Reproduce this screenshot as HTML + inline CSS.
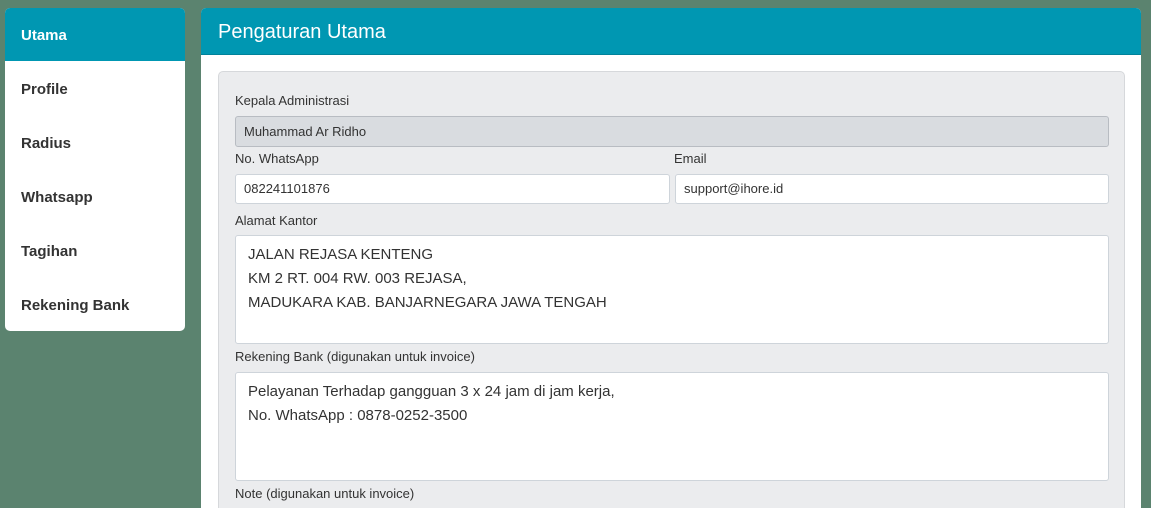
<!DOCTYPE html><html><head><style>
body{margin:0;width:1151px;height:502px;background:#5b836f;font-family:"Liberation Sans",sans-serif;overflow:hidden;position:relative}
.side{position:absolute;left:5px;top:8px;width:180px;height:323px;background:#fff;border-radius:5px;overflow:hidden}
.side div{height:54px;line-height:58px;padding-left:16px;font-size:15px;font-weight:bold;color:#333}
.side div.a{background:#0097b2;color:#fff;height:53px;line-height:56px}
.main{position:absolute;left:201px;top:8px;width:940px;height:500px;background:#fff;border-radius:5px 5px 0 0;overflow:hidden}
.hd{height:46px;background:#0097b2;border-bottom:1px solid #00829a;color:#fff;font-size:20px;line-height:48px;padding-left:17px}
.card{position:absolute;left:17px;top:63px;width:905px;height:460px;background:#ebecee;border:1px solid #d6d8db;border-radius:5px}
.l{position:absolute;left:16px;font-size:13px;color:#333}
.in{position:absolute;background:#fff;border:1px solid #ced4da;border-radius:3px;font-size:13px;color:#333;box-sizing:border-box;padding-left:8px}
.ta{font-size:15px;line-height:24px;padding:7px 12px;color:#333}
</style></head><body>
<div class="side"><div class="a">Utama</div><div>Profile</div><div>Radius</div><div>Whatsapp</div><div>Tagihan</div><div>Rekening Bank</div></div>
<div class="main"><div class="hd">Pengaturan Utama</div>
<div class="card">
<div class="l" style="top:21px">Kepala Administrasi</div>
<div class="in" style="left:16px;top:44px;width:874px;height:31px;line-height:29px;background:#d9dce0;border-color:#b8bcc2">Muhammad Ar Ridho</div>
<div class="l" style="top:79px">No. WhatsApp</div>
<div class="l" style="left:455px;top:79px">Email</div>
<div class="in" style="left:16px;top:102px;width:435px;height:30px;line-height:28px">082241101876</div>
<div class="in" style="left:456px;top:102px;width:434px;height:30px;line-height:28px">support@ihore.id</div>
<div class="l" style="top:141px">Alamat Kantor</div>
<div class="in ta" style="left:16px;top:163px;width:874px;height:109px">JALAN REJASA KENTENG<br>KM 2 RT. 004 RW. 003 REJASA,<br>MADUKARA KAB. BANJARNEGARA JAWA TENGAH</div>
<div class="l" style="top:277px">Rekening Bank (digunakan untuk invoice)</div>
<div class="in ta" style="left:16px;top:300px;width:874px;height:109px">Pelayanan Terhadap gangguan 3 x 24 jam di jam kerja,<br>No. WhatsApp : 0878-0252-3500</div>
<div class="l" style="top:414px">Note (digunakan untuk invoice)</div>
</div></div>
</body></html>
